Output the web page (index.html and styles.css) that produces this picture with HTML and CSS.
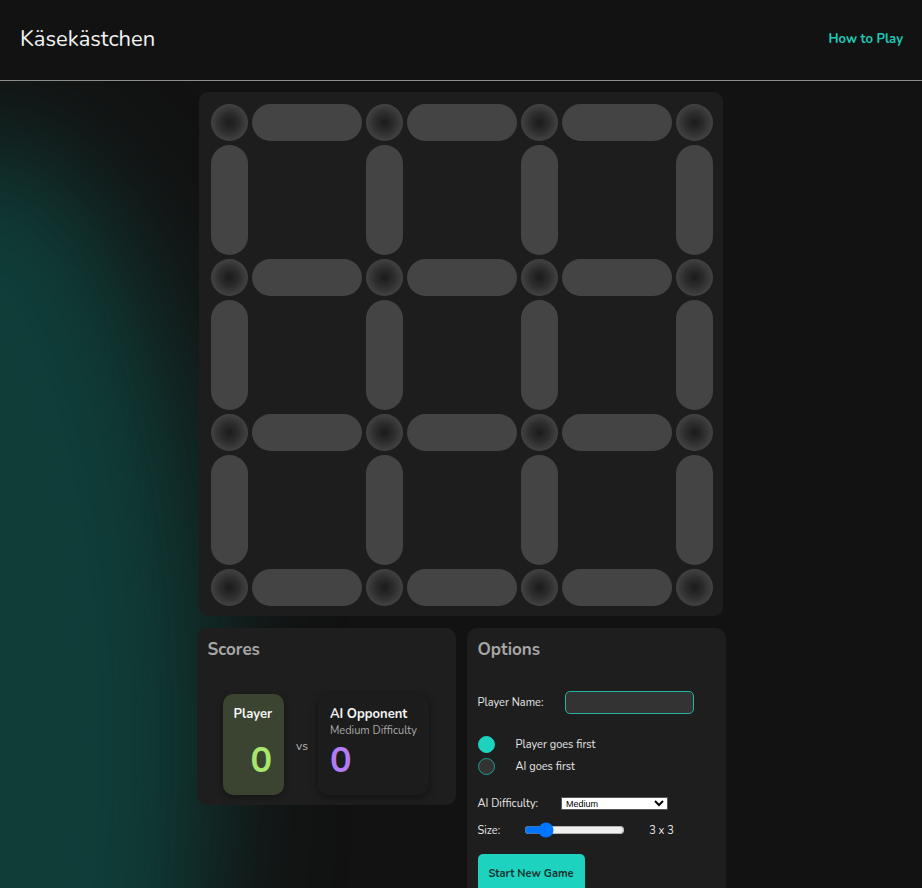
FILE: index.html
```html
<!DOCTYPE html>
<html lang="de">
<head>
<meta charset="utf-8">
<title>Käsekästchen</title>
<link rel="stylesheet" href="styles.css">
</head>
<body>
<div class="glow"></div>
<header class="topbar">
  <h1 class="brand">Käsekästchen</h1>
  <a class="howto" href="#">How to Play</a>
</header>
<main class="main">
  <section class="board">
    <div class="grid">
      <div class="dot"></div><div class="edge h"></div><div class="dot"></div><div class="edge h"></div><div class="dot"></div><div class="edge h"></div><div class="dot"></div>
      <div class="edge v"></div><div class="cell"></div><div class="edge v"></div><div class="cell"></div><div class="edge v"></div><div class="cell"></div><div class="edge v"></div>
      <div class="dot"></div><div class="edge h"></div><div class="dot"></div><div class="edge h"></div><div class="dot"></div><div class="edge h"></div><div class="dot"></div>
      <div class="edge v"></div><div class="cell"></div><div class="edge v"></div><div class="cell"></div><div class="edge v"></div><div class="cell"></div><div class="edge v"></div>
      <div class="dot"></div><div class="edge h"></div><div class="dot"></div><div class="edge h"></div><div class="dot"></div><div class="edge h"></div><div class="dot"></div>
      <div class="edge v"></div><div class="cell"></div><div class="edge v"></div><div class="cell"></div><div class="edge v"></div><div class="cell"></div><div class="edge v"></div>
      <div class="dot"></div><div class="edge h"></div><div class="dot"></div><div class="edge h"></div><div class="dot"></div><div class="edge h"></div><div class="dot"></div>
    </div>
  </section>
  <div class="panels">
    <section class="panel scores">
      <h2 class="panel-title">Scores</h2>
      <div class="score-row">
        <div class="card player">
          <div class="card-name">Player</div>
          <div class="card-sub"></div>
          <div class="card-score green">0</div>
        </div>
        <div class="vs">vs</div>
        <div class="card ai">
          <div class="card-name">AI Opponent</div>
          <div class="card-sub">Medium Difficulty</div>
          <div class="card-score purple">0</div>
        </div>
      </div>
    </section>
    <section class="panel options">
      <h2 class="panel-title">Options</h2>
      <div class="opt-row name-row">
        <label class="opt-label" for="pname">Player Name:</label>
        <input class="name-input" id="pname" type="text">
      </div>
      <div class="radios">
        <label class="radio-row"><input type="radio" name="first" class="radio" checked><span>Player goes first</span></label>
        <label class="radio-row"><input type="radio" name="first" class="radio"><span>AI goes first</span></label>
      </div>
      <div class="opt-row diff-row">
        <label class="opt-label" for="diff">AI Difficulty:</label>
        <select id="diff" class="diff-select">
          <option>Easy</option>
          <option selected>Medium</option>
          <option>Hard</option>
        </select>
      </div>
      <div class="opt-row size-row">
        <label class="opt-label" for="size">Size:</label>
        <input id="size" class="size-range" type="range" min="2" max="8" value="3">
        <span class="size-val">3 x 3</span>
      </div>
      <button class="start-btn">Start New Game</button>
    </section>
  </div>
</main>
</body>
</html>
```
FILE: styles.css
```css
* { box-sizing: border-box; }

html, body {
  margin: 0;
  padding: 0;
}

body {
  background: #121212;
  color: #e8e8e8;
  font-family: "Nunito", "Lato", "Noto Sans", sans-serif;
  position: relative;
  min-height: 888px;
  overflow: hidden;
}

.glow {
  position: absolute;
  left: -230px;
  top: 140px;
  width: 440px;
  height: 1200px;
  border-radius: 50%;
  background: #0f3e39;
  filter: blur(60px);
  z-index: 0;
}

.topbar {
  position: relative;
  z-index: 1;
  height: 81px;
  display: flex;
  align-items: center;
  justify-content: space-between;
  padding: 0 19px 2px 20px;
  border-bottom: 1px solid #8c8c8c;
  background: #121212;
}

.brand {
  margin: 0;
  font-size: 22px;
  font-weight: 400;
  color: #f2f2f2;
}

.howto {
  color: #1ec9b6;
  font-weight: 700;
  font-size: 13px;
  text-decoration: none;
}

.main {
  position: relative;
  z-index: 1;
  display: flex;
  flex-direction: column;
  align-items: center;
  padding-top: 11px;
}

.board {
  width: 524px;
  background: #1d1d1d;
  border-radius: 9px;
  padding: 12px 10px 10px 12px;
}

.grid {
  display: grid;
  grid-template-columns: 37px 110px 37px 110px 37px 110px 37px;
  grid-template-rows: 37px 110px 37px 110px 37px 110px 37px;
  gap: 4px;
}

.dot {
  border-radius: 50%;
  background: radial-gradient(circle at 50% 50%, #1b1b1b 0%, #2c2c2c 35%, #454545 75%, #585858 100%);
}

.edge {
  background: #444444;
  border-radius: 19px;
}

.panels {
  display: flex;
  gap: 11px;
  margin-top: 12px;
}

.panel {
  width: 259px;
  background: #1e1e1e;
  border-radius: 10px;
  padding: 11px;
}

.panel-title {
  margin: 0;
  font-size: 17px;
  line-height: 22px;
  font-weight: 700;
  color: #a6a6a6;
}

.scores {
  height: 177px;
  align-self: flex-start;
}

.score-row {
  display: flex;
  justify-content: center;
  align-items: center;
  margin-top: 33px;
}

.card {
  border-radius: 10px;
  padding: 11px 12px;
  height: 101px;
  display: flex;
  flex-direction: column;
}

.card.player {
  width: 61px;
  background: #3b4430;
  align-items: flex-end;
  box-shadow: 0 2px 6px rgba(0,0,0,0.35);
}

.card.ai {
  width: 111px;
  background: #1c1c1c;
  box-shadow: 0 2px 8px rgba(0,0,0,0.45);
}

.card-name {
  font-size: 13px;
  line-height: 18px;
  font-weight: 700;
  color: #f4f4f4;
}

.card-sub {
  font-size: 11px;
  line-height: 15px;
  color: #a9a9a9;
  white-space: nowrap;
  min-height: 15px;
}

.card-score {
  margin-top: 4px;
  font-size: 36px;
  line-height: 38px;
  font-weight: 700;
}

.green { color: #a8e66e; }
.purple { color: #b27cf2; }

.vs {
  font-size: 12px;
  color: #b8b8b8;
  margin: 0 10px 0 12px;
  padding-top: 3px;
}

.options {
  height: 290px;
}

.opt-row {
  display: flex;
  align-items: center;
  font-size: 11px;
  color: #e6e6e6;
}

.opt-label {
  color: #e6e6e6;
}

.name-row {
  margin-top: 30px;
  height: 23px;
}

.name-input {
  margin-left: 22px;
  width: 129px;
  height: 23px;
  background: #333333;
  border: 1px solid #26b3a4;
  border-radius: 5px;
  color: #eee;
  outline: none;
}

.radios {
  margin-top: 22px;
  display: flex;
  flex-direction: column;
  gap: 5px;
}

.radio-row {
  display: flex;
  align-items: center;
  font-size: 11px;
  color: #e6e6e6;
}

.radio {
  appearance: none;
  -webkit-appearance: none;
  margin: 0 21px 0 0;
  width: 17px;
  height: 17px;
  border-radius: 50%;
  background: #333333;
  border: 1px solid #1b9f91;
}

.radio:checked {
  background: #1dd3c0;
  border-color: #1dd3c0;
}

.diff-row {
  margin-top: 21px;
  height: 14px;
}

.diff-select {
  margin-left: 23px;
  width: 107px;
  height: 13px;
  font-size: 9px;
  padding: 0;
  background: #fff;
  color: #000;
  border: 1px solid #555;
  border-radius: 0;
}

.size-row {
  margin-top: 12px;
  height: 16px;
}

.size-range {
  margin: 0 0 0 24px;
  width: 101px;
  height: 16px;
}

.size-val {
  margin-left: 24px;
}

.start-btn {
  margin-top: 16px;
  width: 107px;
  height: 38px;
  background: #1dd3c0;
  color: #163330;
  border: none;
  border-radius: 5px;
  font-family: inherit;
  font-size: 11px;
  font-weight: 700;
  padding-top: 2px;
}
```
